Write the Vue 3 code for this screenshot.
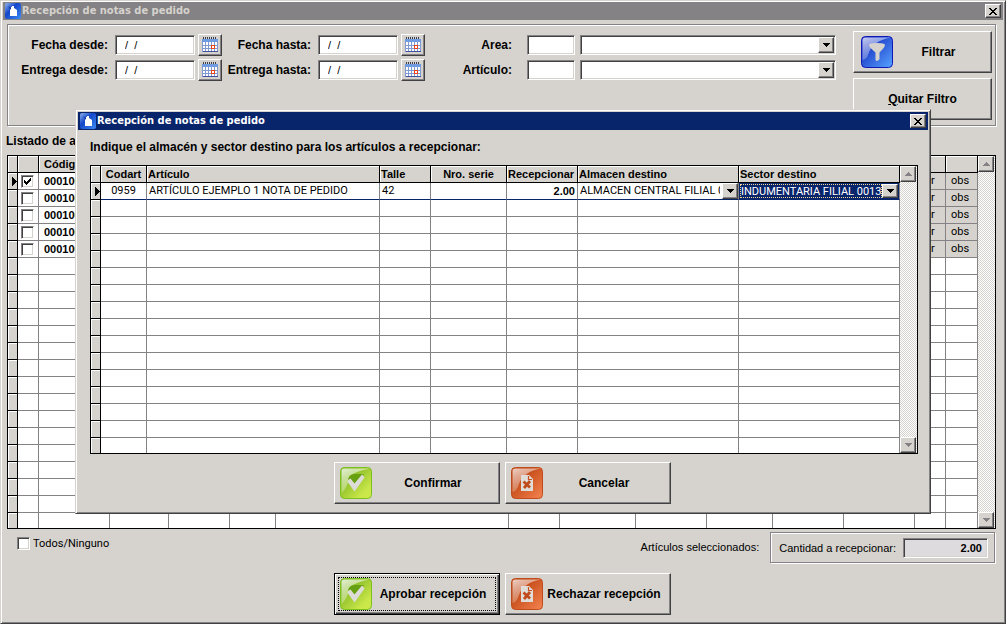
<script setup>
import { ref, h } from 'vue'

const AppIcon = () =>
  h('svg', { width: 16, height: 16, viewBox: '0 0 16 16', 'aria-hidden': 'true' }, [
    h('defs', null, [
      h('linearGradient', { id: 'app-blue', x1: 0, y1: 0, x2: 1, y2: 1 }, [
        h('stop', { offset: '0', 'stop-color': '#8fb4ee' }),
        h('stop', { offset: '0.4', 'stop-color': '#1446c8' }),
        h('stop', { offset: '1', 'stop-color': '#3f8cf5' })
      ])
    ]),
    h('rect', { width: 16, height: 16, rx: 2, fill: 'url(#app-blue)' }),
    h('path', { d: 'M5 6h1V4h1V3h2v2l3 2v6H5z', fill: '#fff' }),
    h('path', { d: 'M3 3l3 4v-2z', fill: '#0a2c9c' })
  ])

const CalendarIcon = () =>
  h('svg', { width: 16, height: 16, viewBox: '0 0 16 16', 'aria-hidden': 'true', 'shape-rendering': 'crispEdges' }, [
    h('path', { d: 'M0 3h16v12H0z', fill: '#fff' }),
    h('path', { d: 'M0 2h16v3H0z', fill: '#6f9be0' }),
    h('path', { d: 'M1 0h1v2H1zM3 0h1v2H3zM5 0h1v2H5zM7 0h1v2H7zM9 0h1v2H9zM11 0h1v2h-1zM13 0h1v2h-1z', fill: '#3b3d4a' }),
    h('path', { d: 'M0.500 5v9.500h15V5M1 8.500h14M1 11.500h14M3.500 5v10M6.500 5v10M9.500 5v10M12.500 5v10', stroke: '#7f9ad0', fill: 'none' }),
    h('path', { d: 'M1 14.500h15', stroke: '#43519a' }),
    h('path', { d: 'M9.500 8.500h3v3h-3z', stroke: '#e8431c', fill: '#fff' })
  ])

const FunnelIcon = () =>
  h('svg', { width: 32, height: 32, viewBox: '0 0 32 32', 'aria-hidden': 'true' }, [
    h('defs', null, [
      h('linearGradient', { id: 'funnel-blue', x1: 0, y1: 0, x2: 1, y2: 1 }, [
        h('stop', { offset: '0.2', 'stop-color': '#1a35c4' }),
        h('stop', { offset: '1', 'stop-color': '#56a4ff' })
      ]),
      h('linearGradient', { id: 'gloss', x1: 0, y1: 0, x2: 0.6, y2: 1 }, [
        h('stop', { offset: '0', 'stop-color': '#fff', 'stop-opacity': '0.75' }),
        h('stop', { offset: '1', 'stop-color': '#fff', 'stop-opacity': '0.1' })
      ])
    ]),
    h('rect', { x: 0.5, y: 0.5, width: 31, height: 31, rx: 4, fill: 'url(#funnel-blue)', stroke: '#1218b8' }),
    h('path', { d: 'M1.500 4q0-2.500 3-2.500h25Q11 5 7 19q-1 4-5.500 5z', fill: 'url(#gloss)' }),
    h('path', { d: 'M8 9q0-2 8-2t8 2q0 2-5.500 7.500V23q-1 2-3 2-1 0-1-2v-6.500Q8 11 8 9z', fill: '#d6d3ce' })
  ])

const CheckIcon = () =>
  h('svg', { width: 32, height: 32, viewBox: '0 0 32 32', 'aria-hidden': 'true' }, [
    h('defs', null, [
      h('linearGradient', { id: 'check-green', x1: 0, y1: 0, x2: 1, y2: 1 }, [
        h('stop', { offset: '0.2', 'stop-color': '#7fb522' }),
        h('stop', { offset: '0.8', 'stop-color': '#cbe84a' })
      ]),
      h('linearGradient', { id: 'check-gloss', x1: 0, y1: 0, x2: 0.6, y2: 1 }, [
        h('stop', { offset: '0', 'stop-color': '#fff', 'stop-opacity': '0.8' }),
        h('stop', { offset: '1', 'stop-color': '#fff', 'stop-opacity': '0.1' })
      ])
    ]),
    h('rect', { x: 0.5, y: 0.5, width: 31, height: 31, rx: 4, fill: 'url(#check-green)', stroke: '#7cc01c' }),
    h('path', { d: 'M1.500 4q0-2.500 3-2.500h25Q16 4 10 9 7 22 1.500 26z', fill: 'url(#check-gloss)' }),
    h('path', { d: 'M8 14q0-7 7-7h9l-8 10z', fill: '#67a010' }),
    h('path', { d: 'M8 13l2.500-1.500 4 5L22 7.500l2.500 3L14.500 24.500 8 15.500z', fill: '#dedcd6' })
  ])

const RejectIcon = () =>
  h('svg', { width: 32, height: 32, viewBox: '0 0 32 32', 'aria-hidden': 'true' }, [
    h('defs', null, [
      h('linearGradient', { id: 'reject-red', x1: 0, y1: 0, x2: 1, y2: 1 }, [
        h('stop', { offset: '0.2', 'stop-color': '#bc4210' }),
        h('stop', { offset: '1', 'stop-color': '#f58450' })
      ]),
      h('linearGradient', { id: 'reject-gloss', x1: 0, y1: 0, x2: 0.6, y2: 1 }, [
        h('stop', { offset: '0', 'stop-color': '#fff', 'stop-opacity': '0.75' }),
        h('stop', { offset: '1', 'stop-color': '#fff', 'stop-opacity': '0.08' })
      ])
    ]),
    h('rect', { x: 0.5, y: 0.5, width: 31, height: 31, rx: 4, fill: 'url(#reject-red)', stroke: '#c04c1c' }),
    h('path', { d: 'M1.500 4q0-2.500 3-2.500h25Q12 5 8 17 6 24 1.500 25z', fill: 'url(#reject-gloss)' }),
    h('path', { d: 'M10 8h8l4 4v12H10z', fill: '#e0dcd8' }),
    h('path', { d: 'M17.500 9v3.500H21', fill: 'none', stroke: '#c85020', 'stroke-width': 1.2 }),
    h('path', { d: 'M12.500 14.500l6.500 6M19 14l-6 7', stroke: '#c04c1c', 'stroke-width': 2.8 })
  ])

const CloseIcon = () =>
  h('svg', { width: 8, height: 7, viewBox: '0 0 8 7', 'aria-hidden': 'true', 'shape-rendering': 'crispEdges' }, [
    h('path', { d: 'M0 0h2v1H0zM6 0h2v1H6zM1 1h2v1H1zM5 1h2v1H5zM2 2h4v1H2zM3 3h2v1H3zM2 4h4v1H2zM1 5h2v1H1zM5 5h2v1H5zM0 6h2v1H0zM6 6h2v1H6z', fill: '#000' })
  ])

const DownArrow = () =>
  h('svg', { width: 7, height: 4, viewBox: '0 0 7 4', 'aria-hidden': 'true', 'shape-rendering': 'crispEdges' }, [
    h('path', { d: 'M0 0h7v1H0zM1 1h5v1H1zM2 2h3v1H2zM3 3h1v1H3z', fill: 'currentColor' })
  ])

const UpArrow = () =>
  h('svg', { width: 7, height: 4, viewBox: '0 0 7 4', 'aria-hidden': 'true', 'shape-rendering': 'crispEdges' }, [
    h('path', { d: 'M3 0h1v1H3zM2 1h3v1H2zM1 2h5v1H1zM0 3h7v1H0z', fill: 'currentColor' })
  ])

const RecordArrow = () =>
  h('svg', { width: 5, height: 9, viewBox: '0 0 5 9', 'aria-hidden': 'true', 'shape-rendering': 'crispEdges' }, [
    h('path', { d: 'M0 0h1v1h1v1h1v1h1v1h1v1h-1v1h-1v1h-1v1h-1v1H0z', fill: '#000' })
  ])

const dates = ref({ desde: '/  /', hasta: '/  /', entregaDesde: '/  /', entregaHasta: '/  /' })
const orders = ref([true, false, false, false, false].map((checked) => ({ code: '000100', checked })))
const all = ref(false)
const listBlankRows = 16
const dialogBlankRows = 15
</script>

<template>
  <main class="window">
    <header class="titlebar inactive">
      <AppIcon />
      <h1>Recepción de notas de pedido</h1>
      <button type="button" class="close raised" aria-label="Cerrar ventana"><CloseIcon /></button>
    </header>

    <form class="filters" @submit.prevent>
      <div class="fields dates">
        <label for="f-desde">Fecha desde:</label>
        <input id="f-desde" v-model="dates.desde" class="sunken" type="text" />
        <button type="button" class="calendar raised" aria-label="Elegir fecha desde"><CalendarIcon /></button>
        <label for="f-hasta">Fecha hasta:</label>
        <input id="f-hasta" v-model="dates.hasta" class="sunken" type="text" />
        <button type="button" class="calendar raised" aria-label="Elegir fecha hasta"><CalendarIcon /></button>
        <label for="e-desde">Entrega desde:</label>
        <input id="e-desde" v-model="dates.entregaDesde" class="sunken" type="text" />
        <button type="button" class="calendar raised" aria-label="Elegir entrega desde"><CalendarIcon /></button>
        <label for="e-hasta">Entrega hasta:</label>
        <input id="e-hasta" v-model="dates.entregaHasta" class="sunken" type="text" />
        <button type="button" class="calendar raised" aria-label="Elegir entrega hasta"><CalendarIcon /></button>
      </div>
      <div class="fields lookups">
        <label for="area">Area:</label>
        <input id="area" class="sunken" type="text" />
        <div class="combo sunken">
          <select aria-label="Nombre del area"><option></option></select>
          <span class="drop raised"><DownArrow /></span>
        </div>
        <label for="articulo">Artículo:</label>
        <input id="articulo" class="sunken" type="text" />
        <div class="combo sunken">
          <select aria-label="Nombre del artículo"><option></option></select>
          <span class="drop raised"><DownArrow /></span>
        </div>
      </div>
      <div class="filter-actions">
        <button type="submit" class="action raised"><FunnelIcon /><span>Filtrar</span></button>
        <button type="button" class="action raised"><span><u>Q</u>uitar Filtro</span></button>
      </div>
    </form>

    <h2 class="caption">Listado de a</h2>

    <div class="grid">
      <table>
        <colgroup>
          <col class="w10" /><col class="w21" /><col class="w71" /><col class="w59" /><col class="w61" />
          <col class="w46" /><col /><col class="w51" /><col class="w76" /><col class="w71" /><col class="w66" />
          <col class="w71" /><col class="w71" /><col class="w31" /><col class="w32" />
        </colgroup>
        <thead>
          <tr><th></th><th></th><th class="code">Código</th><th v-for="n in 12" :key="n"></th></tr>
        </thead>
        <tbody>
          <tr v-for="(order, i) in orders" :key="i">
            <td class="selector"><RecordArrow v-if="i === 0" /></td>
            <td class="tick">
              <span class="check">
                <input v-model="order.checked" class="sunken" type="checkbox" :aria-label="'Seleccionar fila ' + (i + 1)" />
                <svg v-if="order.checked" width="7" height="7" viewBox="0 0 7 7" shape-rendering="crispEdges" aria-hidden="true">
                  <path d="M0 2h1v1h1v1h1v-1h1v-1h1v-1h1v-1h1v3h-1v1h-1v1h-1v1h-1v1h-1v-1h-1v-1h-1z" />
                </svg>
              </span>
            </td>
            <td class="code">{{ order.code }}</td>
            <td v-for="n in 10" :key="n"></td>
            <td class="link">ver</td>
            <td class="link">obs</td>
          </tr>
          <tr v-for="r in listBlankRows" :key="'b' + r">
            <td class="selector"></td>
            <td v-for="n in 14" :key="n"></td>
          </tr>
        </tbody>
      </table>
      <div class="scroll">
        <button type="button" class="raised" aria-label="Subir listado"><UpArrow /></button>
        <button type="button" class="raised" aria-label="Bajar listado"><DownArrow /></button>
      </div>
    </div>

    <footer class="summary">
      <label class="all"><input v-model="all" class="sunken" type="checkbox" />Todos/Ninguno</label>
      <span class="selected">Artículos seleccionados:</span>
      <div class="total">
        <label for="total">Cantidad a recepcionar:</label>
        <input id="total" class="sunken" type="text" value="2.00" readonly />
      </div>
    </footer>

    <div class="actions">
      <button type="button" class="action raised default"><CheckIcon /><span>Aprobar recepción</span></button>
      <button type="button" class="action raised"><RejectIcon /><span>Rechazar recepción</span></button>
    </div>

    <section class="dialog" role="dialog" aria-labelledby="dialog-title">
      <header class="titlebar">
        <AppIcon />
        <h2 id="dialog-title">Recepción de notas de pedido</h2>
        <button type="button" class="close raised" aria-label="Cerrar diálogo"><CloseIcon /></button>
      </header>
      <p class="prompt">Indique el almacén y sector destino para los artículos a recepcionar:</p>
      <div class="grid">
        <table>
          <colgroup>
            <col class="w10" /><col class="w46" /><col /><col class="w51" /><col class="w76" />
            <col class="w71" /><col class="w161" /><col class="w161" />
          </colgroup>
          <thead>
            <tr>
              <th></th><th class="center">Codart</th><th>Artículo</th><th>Talle</th>
              <th class="center">Nro. serie</th><th>Recepcionar</th><th>Almacen destino</th><th>Sector destino</th>
            </tr>
          </thead>
          <tbody>
            <tr class="current">
              <td class="selector"><RecordArrow /></td>
              <td class="center">0959</td>
              <td>ARTÍCULO EJEMPLO 1 NOTA DE PEDIDO</td>
              <td>42</td>
              <td></td>
              <td class="amount">2.00</td>
              <td class="pick">
                <div class="combo">
                  <select aria-label="Almacen destino"><option>ALMACEN CENTRAL FILIAL 0013</option></select>
                  <span class="drop raised"><DownArrow /></span>
                </div>
              </td>
              <td class="pick active">
                <div class="combo">
                  <select aria-label="Sector destino"><option>INDUMENTARIA FILIAL 0013</option></select>
                  <span class="drop raised"><DownArrow /></span>
                </div>
              </td>
            </tr>
            <tr v-for="r in dialogBlankRows" :key="r">
              <td class="selector"></td>
              <td v-for="n in 7" :key="n"></td>
            </tr>
          </tbody>
        </table>
        <div class="scroll">
          <button type="button" class="raised" aria-label="Subir"><UpArrow /></button>
          <button type="button" class="raised" aria-label="Bajar"><DownArrow /></button>
        </div>
      </div>
      <div class="actions">
        <button type="button" class="action raised"><CheckIcon /><span>Confirmar</span></button>
        <button type="button" class="action raised"><RejectIcon /><span>Cancelar</span></button>
      </div>
    </section>
  </main>
</template>

<style>
body {
  background: #d6d3ce;
}
</style>

<style scoped>
* {
  box-sizing: border-box;
}
.window,
.dialog {
  background: #d6d3ce;
  border: 1px solid;
  border-color: #d6d3ce #424142 #424142 #d6d3ce;
  box-shadow: inset 1px 1px #fff, inset -1px -1px #848284;
}
.window {
  position: relative;
  min-height: 100vh;
  padding: 1px 2px;
  color: #000;
  font: 11px/15px "Liberation Sans", Arial, sans-serif;
}
button,
input,
select {
  margin: 0;
  border-radius: 0;
  color: inherit;
  font: inherit;
}
input,
select {
  appearance: none;
  min-width: 0;
  outline: 0;
}
svg {
  display: block;
  flex: none;
}
h1,
h2,
p {
  margin: 0;
  font-size: 12px;
  font-weight: bold;
}
.raised {
  display: flex;
  align-items: center;
  justify-content: center;
  padding: 0;
  background: #d6d3ce;
  border: 1px solid;
  border-color: #fff #424142 #424142 #fff;
  box-shadow: inset -1px -1px #848284;
}
.sunken {
  background: #fff;
  border: 1px solid;
  border-color: #848284 #fff #fff #848284;
  box-shadow: inset 1px 1px #424142, inset -1px -1px #d6d3ce;
}

.titlebar {
  display: flex;
  align-items: center;
  gap: 1px;
  height: 18px;
  padding: 0 2px;
  background: #08246b;
  color: #fff;
}
.titlebar.inactive {
  background: #848284;
  color: #d6d3ce;
}
.titlebar h1,
.titlebar h2 {
  flex: 1;
  font: bold 11px/18px "DejaVu Sans Condensed", "Open Sans", sans-serif;
}
.close {
  width: 16px;
  height: 14px;
}

.filters {
  display: flex;
  margin: 4px 7px 0 4px;
  padding: 6px 3px 5px 17px;
  border: 1px solid #848284;
  box-shadow: 1px 1px #fff, inset 1px 1px #fff;
}
.fields {
  display: grid;
  grid-auto-rows: 22px;
  row-gap: 3px;
  align-content: start;
  align-items: center;
  padding-top: 3px;
}
.fields label {
  font-size: 12px;
  font-weight: bold;
  white-space: nowrap;
  justify-self: end;
}
.fields input {
  height: 20px;
}
.dates {
  grid-template-columns: 87px 80px 24px 90px 80px 24px;
  column-gap: 3px;
}
.dates label {
  margin-right: 4px;
}
.dates input {
  padding: 0 0 0 9px;
}
.calendar {
  height: 22px;
}
.lookups {
  grid-template-columns: 60px 48px 256px;
  column-gap: 5px;
  margin: 0 17px 0 auto;
}
.lookups label {
  margin-right: 10px;
}
.combo {
  display: flex;
  height: 20px;
}
.combo.sunken {
  padding: 1px;
}
.combo select {
  flex: 1;
  padding: 0 2px;
  border: 0;
  background: transparent;
}
.drop {
  flex: none;
  width: 16px;
  pointer-events: none;
}
.filter-actions {
  display: grid;
  gap: 5px;
}
.action {
  height: 42px;
  padding: 0 5px;
  font-size: 12px;
  font-weight: bold;
}
.action span {
  flex: 1;
}
.filter-actions .action {
  width: 139px;
  padding: 0 7px;
}

.caption {
  margin: 8px 0 6px 3px;
}
.grid {
  display: flex;
  margin: 0 7px 0 4px;
  border: 1px solid #000;
  background: #fff;
}
.dialog .grid {
  margin: 0 10px 0 12px;
}
table {
  flex: 1;
  width: 0;
  table-layout: fixed;
  border-collapse: separate;
  border-spacing: 0;
}
th,
td {
  height: 17px;
  padding: 0 2px;
  overflow: hidden;
  border: 0 solid #848284;
  border-width: 0 1px 1px 0;
  line-height: 14px;
  text-align: left;
  white-space: nowrap;
}
td {
  font-family: Roboto, "Liberation Sans", sans-serif;
}
th,
.selector {
  padding: 0 1px;
  background: #d6d3ce;
  border-color: #000;
  box-shadow: inset 1px 1px #fff;
}
.selector {
  padding: 0 0 0 4px;
}
tbody tr:last-child td {
  height: 15px;
  border-bottom: 0;
}
.w10 { width: 10px; }
.w21 { width: 21px; }
.w31 { width: 31px; }
.w32 { width: 32px; }
.w46 { width: 46px; }
.w51 { width: 51px; }
.w59 { width: 59px; }
.w61 { width: 61px; }
.w66 { width: 66px; }
.w71 { width: 71px; }
.w76 { width: 76px; }
.w161 { width: 161px; }
.code {
  padding-left: 5px;
  font-family: "Liberation Sans", Arial, sans-serif;
  font-weight: bold;
}
.link {
  padding-left: 5px;
  background: #d6d3ce;
}
.center {
  text-align: center;
}
.amount {
  text-align: right;
  font-family: "Liberation Sans", Arial, sans-serif;
  font-weight: bold;
}
.current td:not(.selector) {
  border-bottom-color: #08246b;
}
.current .pick {
  padding: 0;
}
.pick .combo {
  height: 16px;
}
.pick.active .combo {
  padding: 1px;
  background: #08246b;
  color: #fff;
}
.pick.active select {
  border: 1px dotted #f7db94;
  padding: 0;
}
.pick.active .drop {
  color: #000;
}
.tick {
  padding: 0 0 0 3px;
}
.check {
  position: relative;
  display: block;
  width: 13px;
  height: 13px;
}
input[type="checkbox"] {
  display: block;
  flex: none;
  width: 13px;
  height: 13px;
}
.check svg {
  position: absolute;
  top: 3px;
  left: 3px;
  pointer-events: none;
}
.scroll {
  display: flex;
  flex: none;
  flex-direction: column;
  justify-content: space-between;
  width: 17px;
  padding-right: 1px;
  background: repeating-conic-gradient(#fff 0 25%, #d6d3ce 0 50%) 0 0 / 2px 2px;
}
.scroll button {
  height: 16px;
  color: #848284;
}

.summary {
  display: flex;
  align-items: center;
  margin: 3px 8px 0 14px;
}
.all {
  display: flex;
  align-items: center;
  align-self: flex-start;
  gap: 3px;
  margin-top: 4px;
  font-family: Roboto, "Liberation Sans", sans-serif;
}
.selected {
  margin-left: auto;
}
.total {
  display: flex;
  align-items: center;
  gap: 7px;
  margin-left: 11px;
  padding: 5px 6px 4px 8px;
  border: 1px solid #848284;
  box-shadow: 1px 1px #fff, inset 1px 1px #fff;
}
.total input {
  width: 85px;
  height: 20px;
  padding: 0 5px;
  background: #dedbde;
  text-align: right;
  font-weight: bold;
}
.actions {
  display: flex;
  justify-content: center;
  gap: 5px;
  margin-top: 10px;
  padding-right: 1px;
}
.actions .action {
  width: 166px;
}
.action.default {
  border-color: #000;
  box-shadow: inset 1px 1px #fff, inset -1px -1px #424142, inset -2px -2px #848284;
  outline: 1px dotted #000;
  outline-offset: -5px;
}

.dialog {
  position: absolute;
  top: 108px;
  left: 74px;
  right: 74px;
  padding: 2px 2px 9px;
}
.prompt {
  margin: 10px 12px;
}
.dialog .actions {
  margin-top: 8px;
}
</style>
